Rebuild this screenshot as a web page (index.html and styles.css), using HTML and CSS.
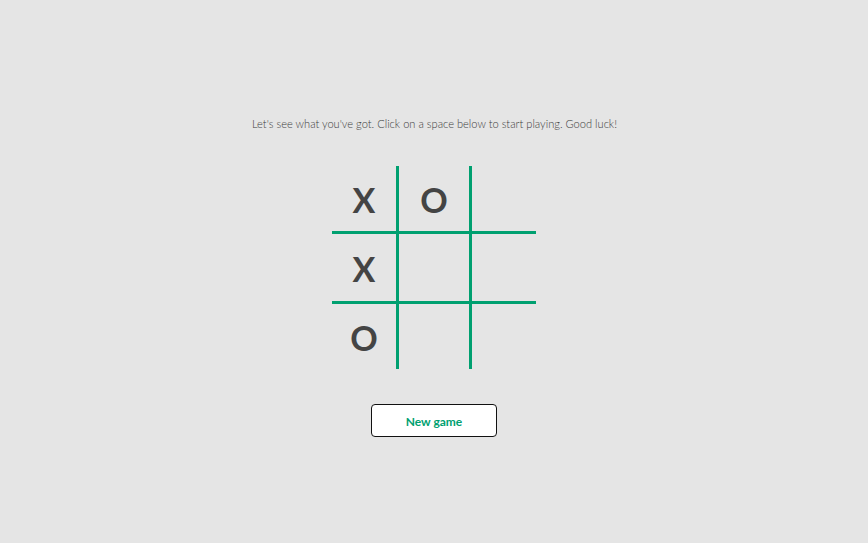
FILE: index.html
```html
<!DOCTYPE html>
<html>
<head>
<meta charset="utf-8">
<link rel="stylesheet" href="styles.css">
</head>
<body>
<main class="game">
  <p class="intro">Let's see what you've got. Click on a space below to start playing. Good luck!</p>
  <div class="board">
    <div class="row">
      <div class="cell">X</div>
      <div class="cell mid">O</div>
      <div class="cell"></div>
    </div>
    <div class="row midrow">
      <div class="cell">X</div>
      <div class="cell mid"></div>
      <div class="cell"></div>
    </div>
    <div class="row">
      <div class="cell">O</div>
      <div class="cell mid"></div>
      <div class="cell"></div>
    </div>
  </div>
  <button class="new-game">New game</button>
</main>
</body>
</html>
```
FILE: styles.css
```css
html, body {
  margin: 0;
  padding: 0;
  background: #e5e5e5;
  height: 100%;
}
.game {
  display: flex;
  flex-direction: column;
  align-items: center;
  padding-top: 115px;
}
.intro {
  margin: 0;
  font-family: "Lato", sans-serif;
  font-weight: 300;
  font-size: 11.1px;
  line-height: 18px;
  color: #3c3c3c;
  padding-left: 1px;
}
.board {
  margin-top: 33px;
  display: flex;
  flex-direction: column;
  margin-left: 0;
}
.row {
  display: flex;
  height: 65px;
}
.row.midrow {
  height: 67px;
  border-top: 3px solid #00a070;
  border-bottom: 3px solid #00a070;
}
.cell {
  width: 64px;
  display: flex;
  align-items: center;
  justify-content: center;
  font-family: "Lato", sans-serif;
  font-weight: 700;
  font-size: 34px;
  color: #444;
  padding-top: 1px;
  box-sizing: border-box;
}
.cell.mid {
  width: 76px;
  border-left: 3px solid #00a070;
  border-right: 3px solid #00a070;
}
.new-game {
  margin-top: 35px;
  width: 126px;
  height: 33px;
  background: #fff;
  border: 1.5px solid #111;
  border-radius: 4px;
  font-family: "Lato", sans-serif;
  font-weight: 700;
  font-size: 12px;
  color: #00a070;
  padding: 0;
  padding-top: 1px;
}
```
